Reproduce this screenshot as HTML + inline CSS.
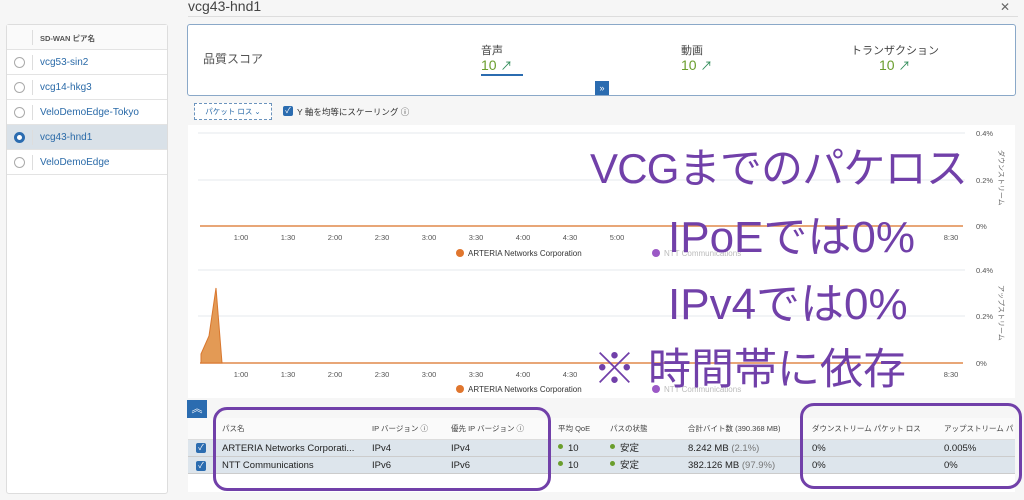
<!DOCTYPE html>
<html><head><meta charset="utf-8"><style>
*{margin:0;padding:0;box-sizing:border-box}
body{width:1024px;height:500px;overflow:hidden;background:#f6f6f6;font-family:"Liberation Sans","Noto Sans CJK JP",sans-serif;position:relative;color:#333}
.a{position:absolute;white-space:nowrap}
.left{left:6px;top:24px;width:162px;height:470px;background:#fff;border:1px solid #ddd;border-radius:3px}
.row{position:absolute;left:0;width:160px;height:25px;border-bottom:1px solid #e3e3e3;font-size:10px;color:#2a6aa8}
.row .r{position:absolute;left:7px;top:7px;width:11px;height:11px;border:1px solid #aaa;border-radius:50%;background:#fff}
.row .sep{position:absolute;left:25px;top:5px;height:15px;border-left:1px solid #ddd}
.row span{position:absolute;left:33px;top:7px;line-height:12px}
.pur{color:#7140a9;font-size:44px;font-family:"Liberation Sans","Noto Sans CJK JP",sans-serif;line-height:1}
.th{font-size:7.5px;color:#444;line-height:10px}
.td{font-size:9.5px;color:#222;line-height:12px}
.dot{display:inline-block;width:5px;height:5px;border-radius:50%;background:#6a9e2d;margin-right:5px;vertical-align:2px}
.cb{position:absolute;width:10px;height:10px;background:#2b6cb0;border-radius:2px;color:#fff;font-size:8px;line-height:10px;text-align:center}
</style></head><body>
<div class="a left">
 <div class="row" style="top:0;height:25px;background:#fafafa"><div class="sep"></div><span style="color:#555;font-size:7.5px;font-weight:bold;top:8px">SD-WAN ピア名</span></div>
 <div class="row" style="top:25px"><div class="r"></div><div class="sep"></div><span>vcg53-sin2</span></div>
 <div class="row" style="top:50px"><div class="r"></div><div class="sep"></div><span>vcg14-hkg3</span></div>
 <div class="row" style="top:75px"><div class="r"></div><div class="sep"></div><span>VeloDemoEdge-Tokyo</span></div>
 <div class="row" style="top:100px;background:#d9e1e8"><div class="r" style="border:3px solid #2b6cb0;background:#fff"></div><div class="sep"></div><span>vcg43-hnd1</span></div>
 <div class="row" style="top:125px"><div class="r"></div><div class="sep"></div><span>VeloDemoEdge</span></div>
</div>
<div class="a" style="left:188px;top:-2px;font-size:14px;color:#444">vcg43-hnd1</div>
<div class="a" style="left:188px;top:16px;width:830px;border-top:1px solid #ddd"></div>
<div class="a" style="left:1000px;top:0px;font-size:12px;color:#666">✕</div>
<div class="a" style="left:187px;top:24px;width:829px;height:72px;background:#fff;border:1px solid #8aa8c8;border-radius:3px"></div>
<div class="a" style="left:203px;top:50px;font-size:12px;color:#555">品質スコア</div>
<div class="a" style="left:481px;top:42px;font-size:11px;color:#444">音声</div>
<div class="a" style="left:481px;top:57px;font-size:14px;color:#6a9e2d">10 <span style="color:#2e8b57;font-size:12px">↗</span></div>
<div class="a" style="left:481px;top:74px;width:42px;height:2px;background:#2b6cb0"></div>
<div class="a" style="left:681px;top:42px;font-size:11px;color:#444">動画</div>
<div class="a" style="left:681px;top:57px;font-size:14px;color:#6a9e2d">10 <span style="color:#2e8b57;font-size:12px">↗</span></div>
<div class="a" style="left:851px;top:42px;font-size:11px;color:#444">トランザクション</div>
<div class="a" style="left:879px;top:57px;font-size:14px;color:#6a9e2d">10 <span style="color:#2e8b57;font-size:12px">↗</span></div>
<div class="a" style="left:595px;top:81px;width:14px;height:14px;background:#2b6cb0;color:#fff;font-size:9px;text-align:center;line-height:14px">»</div>
<div class="a" style="left:194px;top:103px;width:78px;height:17px;border:1px dashed #6b93bd;background:#fff;font-size:7.5px;color:#2a6aa8;text-align:center;line-height:15px">パケット ロス ⌄</div>
<div class="cb" style="left:283px;top:106px">✓</div>
<div class="a" style="left:297px;top:106px;font-size:8.5px;color:#333">Y 軸を均等にスケーリング ⓘ</div>
<div class="a" style="left:188px;top:125px;width:827px;height:273px;background:#fff"></div>
<svg class="a" style="left:0;top:0" width="1024" height="500">
<g stroke="#e6e8ee" stroke-width="1">
<line x1="198" y1="133" x2="965" y2="133"/><line x1="198" y1="180" x2="965" y2="180"/>
<line x1="198" y1="270" x2="965" y2="270"/><line x1="198" y1="316" x2="965" y2="316"/></g>
<line x1="200" y1="226" x2="963" y2="226" stroke="#e0884a" stroke-width="1.5"/>
<line x1="200" y1="363" x2="963" y2="363" stroke="#e0884a" stroke-width="1.5"/>
<polygon points="201,363 201,354 209,336 216,288 222,363" fill="#e39a55" stroke="#d9772e"/>
<g font-size="7.5" fill="#555" font-family="Liberation Sans">
<text x="976" y="136">0.4%</text><text x="976" y="183">0.2%</text><text x="976" y="229">0%</text>
<text x="976" y="273">0.4%</text><text x="976" y="319">0.2%</text><text x="976" y="366">0%</text>
</g>
<g font-size="7.5" fill="#555" font-family="Liberation Sans" text-anchor="middle">
<text x="241" y="240">1:00</text><text x="288" y="240">1:30</text><text x="335" y="240">2:00</text><text x="382" y="240">2:30</text><text x="429" y="240">3:00</text><text x="476" y="240">3:30</text><text x="523" y="240">4:00</text><text x="570" y="240">4:30</text><text x="617" y="240">5:00</text><text x="951" y="240">8:30</text>
<text x="241" y="377">1:00</text><text x="288" y="377">1:30</text><text x="335" y="377">2:00</text><text x="382" y="377">2:30</text><text x="429" y="377">3:00</text><text x="476" y="377">3:30</text><text x="523" y="377">4:00</text><text x="570" y="377">4:30</text><text x="951" y="377">8:30</text>
</g>
<g font-size="8" fill="#333" font-family="Liberation Sans">
<circle cx="460" cy="253" r="4" fill="#e0762e"/><text x="468" y="256">ARTERIA Networks Corporation</text>
<circle cx="656" cy="253" r="4" fill="#9b59c6"/><text x="664" y="256" fill="#bbb">NTT Communications</text>
<circle cx="460" cy="389" r="4" fill="#e0762e"/><text x="468" y="392">ARTERIA Networks Corporation</text>
<circle cx="656" cy="389" r="4" fill="#9b59c6"/><text x="664" y="392" fill="#bbb">NTT Communications</text>
</g>
<g font-size="7" fill="#666" font-family="Noto Sans CJK JP"><text transform="translate(999,150) rotate(90)">ダウンストリーム</text><text transform="translate(999,285) rotate(90)">アップストリーム</text></g>
</svg>
<div class="a pur" style="left:590px;top:148px;font-size:42px;letter-spacing:-0.8px">VCGまでのパケロス</div>
<div class="a pur" style="left:668px;top:216px">IPoEでは0%</div>
<div class="a pur" style="left:668px;top:283px">IPv4では0%</div>
<div class="a pur" style="left:593px;top:349px;font-size:43px">※ 時間帯に依存</div>
<div class="a" style="left:187px;top:400px;width:20px;height:18px;background:#2b6cb0;color:#fff;font-size:11px;text-align:center;line-height:18px">︽</div>
<div class="a" style="left:188px;top:418px;width:827px;height:74px;background:#fff"></div>
<div class="a" style="left:188px;top:418px;width:827px;height:22px;background:#fafafa;border-bottom:1px solid #ddd"></div>
<div class="a" style="left:188px;top:440px;width:827px;height:17px;background:#dde5ec;border-bottom:1px solid #ccc"></div>
<div class="a" style="left:188px;top:457px;width:827px;height:17px;background:#dde5ec;border-bottom:1px solid #ccc"></div>
<div class="a th" style="left:222px;top:424px">パス名</div>
<div class="a th" style="left:372px;top:424px">IP バージョン ⓘ</div>
<div class="a th" style="left:451px;top:424px">優先 IP バージョン ⓘ</div>
<div class="a th" style="left:558px;top:424px">平均 QoE</div>
<div class="a th" style="left:610px;top:424px">パスの状態</div>
<div class="a th" style="left:688px;top:424px">合計バイト数 (390.368 MB)</div>
<div class="a th" style="left:812px;top:424px">ダウンストリーム パケット ロス</div>
<div class="a th" style="left:944px;top:424px">アップストリーム パ</div>
<div class="cb" style="left:196px;top:443px">✓</div><div class="cb" style="left:196px;top:461px">✓</div>
<div class="a td" style="left:222px;top:443px">ARTERIA Networks Corporati...</div>
<div class="a td" style="left:372px;top:443px">IPv4</div><div class="a td" style="left:451px;top:443px">IPv4</div>
<div class="a td" style="left:558px;top:443px"><span class="dot"></span>10</div>
<div class="a td" style="left:610px;top:443px"><span class="dot"></span>安定</div>
<div class="a td" style="left:688px;top:443px">8.242 MB <span style="color:#777">(2.1%)</span></div>
<div class="a td" style="left:812px;top:443px">0%</div><div class="a td" style="left:944px;top:443px">0.005%</div>
<div class="a td" style="left:222px;top:460px">NTT Communications</div>
<div class="a td" style="left:372px;top:460px">IPv6</div><div class="a td" style="left:451px;top:460px">IPv6</div>
<div class="a td" style="left:558px;top:460px"><span class="dot"></span>10</div>
<div class="a td" style="left:610px;top:460px"><span class="dot"></span>安定</div>
<div class="a td" style="left:688px;top:460px">382.126 MB <span style="color:#777">(97.9%)</span></div>
<div class="a td" style="left:812px;top:460px">0%</div><div class="a td" style="left:944px;top:460px">0%</div>
<div class="a" style="left:213px;top:407px;width:338px;height:84px;border:3px solid #7140a9;border-radius:14px"></div>
<div class="a" style="left:800px;top:403px;width:222px;height:86px;border:3px solid #7140a9;border-radius:14px"></div>
</body></html>
